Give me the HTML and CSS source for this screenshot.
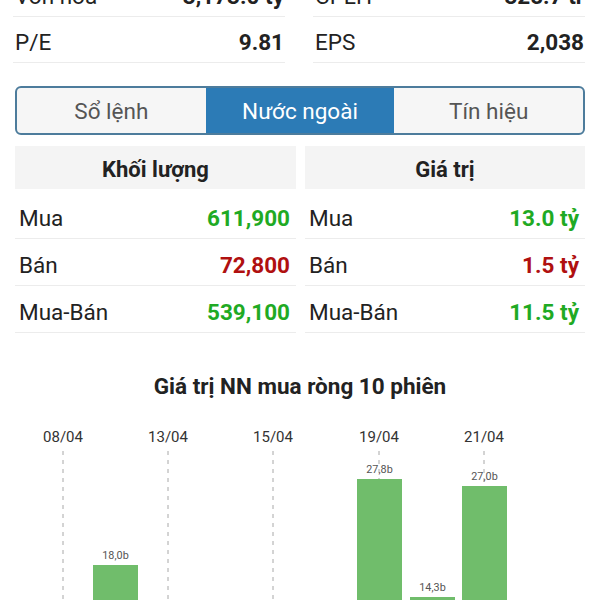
FILE: index.html
```html
<!DOCTYPE html>
<html lang="vi">

<head>
    <meta charset="UTF-8">
    <meta name="viewport" content="width=device-width, initial-scale=1.0">
    <title>Nước ngoài</title>
    <link rel="stylesheet" href="styles.css">
</head>

<body>

    <div class="page">
        <div class="stats">
            <div class="stat-row"><span>Vốn hoá</span><b>3,173.0 tỷ</b></div>
            <div class="stat-row"><span>CPLH</span><b>325.7 tr</b></div>
            <div class="stat-row"><span>P/E</span><b>9.81</b></div>
            <div class="stat-row"><span>EPS</span><b>2,038</b></div>
        </div>

        <div class="tabs">
            <div class="tab">Sổ lệnh</div>
            <div class="tab active">Nước ngoài</div>
            <div class="tab">Tín hiệu</div>
        </div>

        <div class="tables">
            <div class="table">
                <div class="table-head">Khối lượng</div>
                <div class="table-row"><span>Mua</span><b class="up">611,900</b></div>
                <div class="table-row"><span>Bán</span><b class="down">72,800</b></div>
                <div class="table-row"><span>Mua-Bán</span><b class="up">539,100</b></div>
            </div>
            <div class="table">
                <div class="table-head">Giá trị</div>
                <div class="table-row"><span>Mua</span><b class="up">13.0 tỷ</b></div>
                <div class="table-row"><span>Bán</span><b class="down">1.5 tỷ</b></div>
                <div class="table-row"><span>Mua-Bán</span><b class="up">11.5 tỷ</b></div>
            </div>
        </div>

        <h3 class="chart-title">Giá trị NN mua ròng 10 phiên</h3>

        <svg class="chart" width="600" height="320" viewBox="0 0 600 320">
            <!-- đường ngày -->
            <g class="grid">
                <line x1="63" y1="42" x2="63" y2="313" />
                <line x1="168" y1="42" x2="168" y2="313" />
                <line x1="273" y1="42" x2="273" y2="313" />
                <line x1="379" y1="42" x2="379" y2="313" />
                <line x1="484" y1="42" x2="484" y2="313" />
            </g>
            <g class="dates">
                <text x="63" y="33">08/04</text>
                <text x="168" y="33">13/04</text>
                <text x="273" y="33">15/04</text>
                <text x="379" y="33">19/04</text>
                <text x="484" y="33">21/04</text>
            </g>
            <!-- cột giá trị -->
            <g class="bars">
                <rect x="93" y="156" width="45" height="157" />
                <rect x="357" y="70" width="45" height="243" />
                <rect x="410" y="188" width="45" height="125" />
                <rect x="462" y="77" width="45" height="236" />
            </g>
            <g class="values">
                <text x="115.5" y="150">18,0b</text>
                <text x="379.5" y="64">27,8b</text>
                <text x="432.5" y="182">14,3b</text>
                <text x="484.5" y="71">27,0b</text>
            </g>
        </svg>
    </div>

</body>

</html>
```

FILE: styles.css
```css
body {
    margin: 0;
    font-family: Roboto, "Noto Sans", sans-serif;
    color: #222;
    background: #fff;
    overflow: hidden;
}

.page {
    margin-top: -29px;
}

.stats {
    display: grid;
    grid-template-columns: 1fr 1fr;
    column-gap: 28px;
    padding: 0 15px 0 13px;
}

.stat-row {
    box-sizing: border-box;
    display: flex;
    justify-content: space-between;
    align-items: center;
    height: 46px;
    padding: 4px 1px 0 2px;
    border-bottom: 1px solid #ececec;
    font-size: 22.5px;
}

.stat-row b {
    font-weight: 700;
}

.tabs {
    display: flex;
    margin: 23px 15px 0;
    border: 2px solid #4d7c9c;
    border-radius: 6px;
    overflow: hidden;
    background: #f6f6f6;
}

.tab {
    flex: 1;
    height: 45px;
    display: flex;
    align-items: center;
    justify-content: center;
    font-size: 22.5px;
    color: #555;
}

.tab.active {
    background-color: #2c7bb6;
    color: #fff;
}

.tables {
    display: grid;
    grid-template-columns: 281px 280px;
    column-gap: 9px;
    margin: 11px 15px 0;
}

.table-head {
    box-sizing: border-box;
    height: 43px;
    padding-top: 3px;
    display: flex;
    align-items: center;
    justify-content: center;
    background: #f4f4f4;
    font-size: 22px;
    font-weight: 700;
    margin-bottom: 3px;
}

.table-row {
    box-sizing: border-box;
    display: flex;
    justify-content: space-between;
    align-items: center;
    height: 47px;
    padding: 5px 6px 0 4px;
    border-bottom: 1px solid #ececec;
    font-size: 22.5px;
}

.up {
    color: #1faa24;
}

.down {
    color: #b01010;
}

.chart-title {
    margin: 40px 0 0;
    height: 26px;
    line-height: 26px;
    text-align: center;
    font-size: 22.5px;
    font-weight: 700;
    color: #222;
}

.chart {
    display: block;
    margin-top: 10px;
}

.chart .grid line {
    stroke: #a8a8a8;
    stroke-width: 1;
    stroke-dasharray: 4 5;
}

.chart .dates text {
    font-family: Roboto, sans-serif;
    font-size: 15px;
    fill: #333;
    text-anchor: middle;
}

.chart .bars rect {
    fill: #70bd6b;
}

.chart .values text {
    font-family: Roboto, sans-serif;
    font-size: 10.8px;
    fill: #555;
    text-anchor: middle;
}
```
